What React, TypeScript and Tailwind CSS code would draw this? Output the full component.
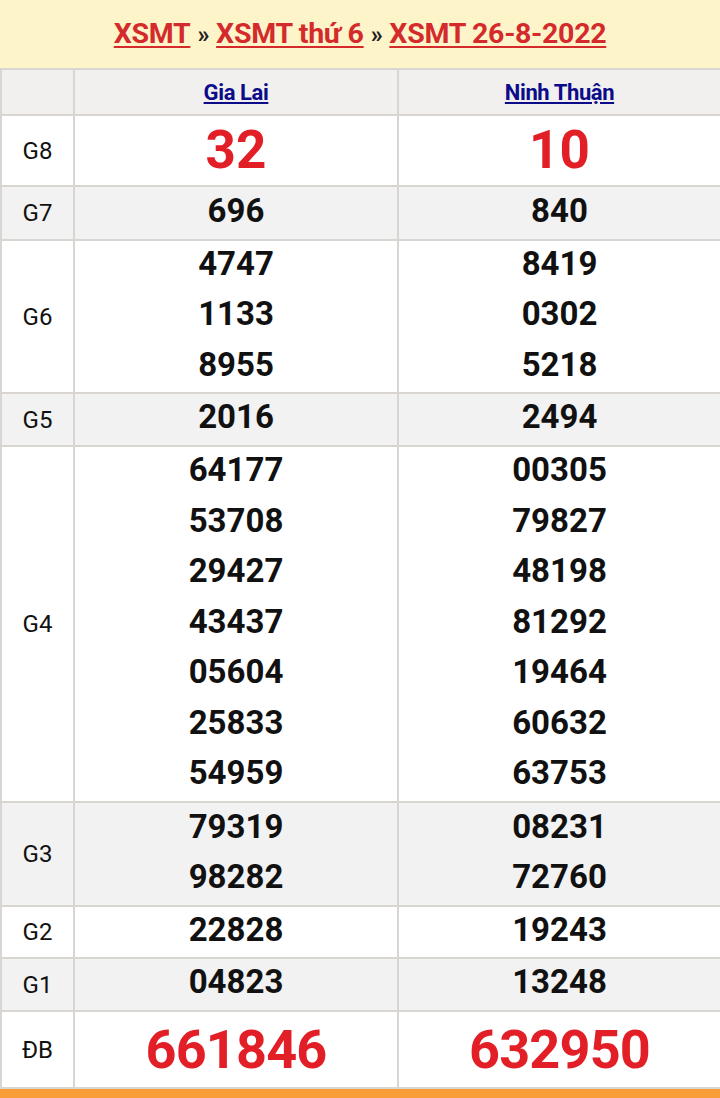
import React from 'react'

interface Row {
  label: string
  left: string[]
  right: string[]
  h: string
  kind?: 'big' | 'db'
  shaded?: boolean
}

const rows: Row[] = [
  { label: 'G8', left: ['32'], right: ['10'], kind: 'big', h: 'h-[71px]' },
  { label: 'G7', left: ['696'], right: ['840'], shaded: true, h: 'h-[54px]' },
  { label: 'G6', left: ['4747', '1133', '8955'], right: ['8419', '0302', '5218'], h: 'h-[153px]' },
  { label: 'G5', left: ['2016'], right: ['2494'], shaded: true, h: 'h-[53px]' },
  {
    label: 'G4',
    left: ['64177', '53708', '29427', '43437', '05604', '25833', '54959'],
    right: ['00305', '79827', '48198', '81292', '19464', '60632', '63753'],
    h: 'h-[356px]',
  },
  { label: 'G3', left: ['79319', '98282'], right: ['08231', '72760'], shaded: true, h: 'h-[104px]' },
  { label: 'G2', left: ['22828'], right: ['19243'], h: 'h-[52px]' },
  { label: 'G1', left: ['04823'], right: ['13248'], shaded: true, h: 'h-[53px]' },
  { label: 'ĐB', left: ['661846'], right: ['632950'], kind: 'db', h: 'h-[77px]' },
]

function Cell({ nums, kind }: { nums: string[]; kind?: 'big' | 'db' }) {
  if (kind === 'big') {
    return (
      <td className="border-2 border-[#d9d5d0] text-center p-0">
        <span className="text-[53px] leading-[53px] font-bold text-[#e21f26]">{nums[0]}</span>
      </td>
    )
  }
  if (kind === 'db') {
    return (
      <td className="border-2 border-[#d9d5d0] text-center p-0">
        <span className="text-[54px] leading-[54px] font-bold text-[#e21f26] tracking-[-0.8px]">{nums[0]}</span>
      </td>
    )
  }
  return (
    <td className="border-2 border-[#d9d5d0] text-center p-0">
      <div className="-mt-1">
        {nums.map((n) => (
          <div key={n} className="text-[33px] leading-[50.5px] font-bold text-[#111]">
            {n}
          </div>
        ))}
      </div>
    </td>
  )
}

export default function App() {
  return (
    <div className="w-[720px] h-[1098px] bg-white overflow-hidden" style={{ fontFamily: 'Roboto, "Noto Sans", sans-serif' }}>
      <div className="h-[68px] bg-[#fdf4c9] flex items-center justify-center">
        <h1 className="text-[28.5px] font-bold text-[#d42a2b] tracking-[-0.3px]">
          <a className="underline decoration-2 underline-offset-[3px]">XSMT</a>
          <span className="text-[#222] mx-[7px] text-[24px]">»</span>
          <a className="underline decoration-2 underline-offset-[3px]">XSMT thứ 6</a>
          <span className="text-[#222] mx-[7px] text-[24px]">»</span>
          <a className="underline decoration-2 underline-offset-[3px]">XSMT 26-8-2022</a>
        </h1>
      </div>

      <table className="w-[720px] table-fixed border-collapse">
        <colgroup>
          <col className="w-[73px]" />
          <col className="w-[324px]" />
          <col className="w-[323px]" />
        </colgroup>
        <thead>
          <tr className="bg-[#f1f0ef] h-[46px]">
            <th className="border-2 border-[#d9d5d0]"></th>
            <th className="border-2 border-[#d9d5d0] p-0">
              <a className="text-[22px] font-bold text-[#0c0c8a] underline decoration-2 underline-offset-2 tracking-[-0.4px]">Gia Lai</a>
            </th>
            <th className="border-2 border-[#d9d5d0] p-0">
              <a className="text-[22px] font-bold text-[#0c0c8a] underline decoration-2 underline-offset-2 tracking-[-0.4px]">Ninh Thuận</a>
            </th>
          </tr>
        </thead>
        <tbody>
          {rows.map((r) => (
            <tr key={r.label} className={`${r.h} ${r.shaded ? 'bg-[#f2f2f2]' : 'bg-white'}`}>
              <td className="border-2 border-[#d9d5d0] text-center text-[24px] text-[#111] p-0">{r.label}</td>
              <Cell nums={r.left} kind={r.kind} />
              <Cell nums={r.right} kind={r.kind} />
            </tr>
          ))}
        </tbody>
      </table>
      <div className="h-[12px] bg-[#f89d38]"></div>
    </div>
  )
}
